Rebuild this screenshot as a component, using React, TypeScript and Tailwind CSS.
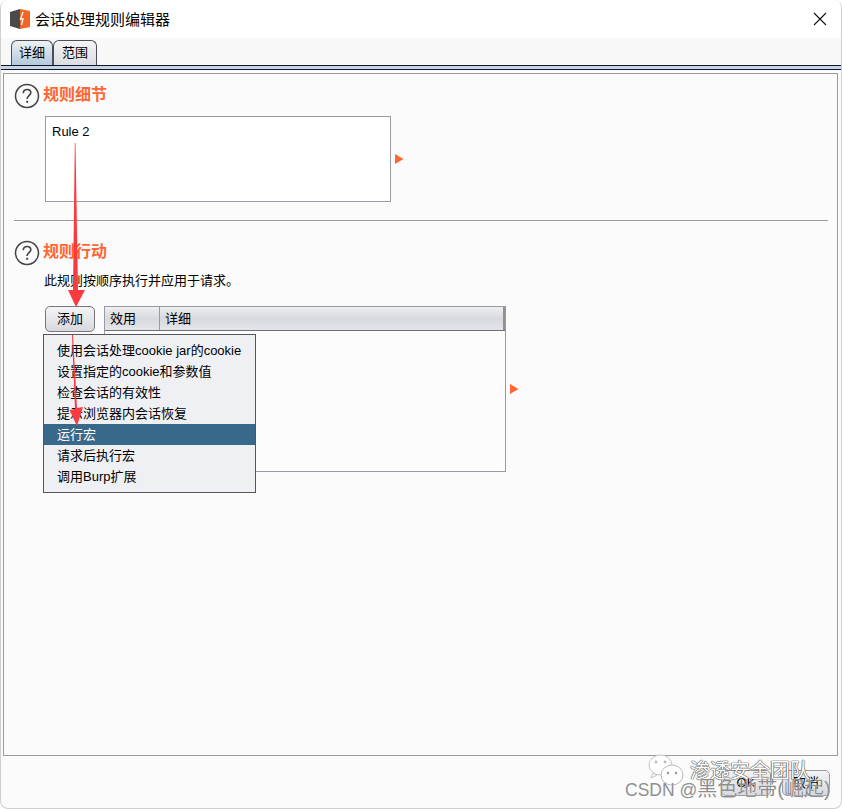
const FONT = { fontFamily: '"Liberation Sans","Noto Sans CJK SC",sans-serif' };

function Help() {
  return (
    <svg width="26" height="26" viewBox="0 0 26 26" className="shrink-0">
      <circle cx="13" cy="13" r="11.5" fill="#fbfbfb" stroke="#444" strokeWidth="1.5" />
      <path d="M9.3 10.2c0-2.3 1.6-3.7 3.8-3.7s3.7 1.3 3.7 3.3c0 2.9-3.7 3-3.7 6.2" fill="none" stroke="#444" strokeWidth="1.6" />
      <rect x="12.2" y="17.8" width="1.9" height="2" fill="#444" />
    </svg>
  );
}

function Tri() {
  return (
    <svg width="9" height="10" viewBox="0 0 9 10" className="shrink-0">
      <path d="M0 0L8.5 5L0 10Z" fill="#ff6633" />
    </svg>
  );
}

const items = [
  '使用会话处理cookie jar的cookie',
  '设置指定的cookie和参数值',
  '检查会话的有效性',
  '提示浏览器内会话恢复',
  '运行宏',
  '请求后执行宏',
  '调用Burp扩展',
];

export default function App() {
  return (
    <div className="relative w-[842px] h-[809px] bg-[#fbfbfb] overflow-hidden text-[13px] text-black flex flex-col rounded-[8px] border-l border-r border-b border-[#cfcfcf]" style={FONT}>
      <div className="h-[38px] bg-white flex items-center pl-[9px] shrink-0">
        <svg width="21" height="20" viewBox="0 0 21 20" className="shrink-0">
          <path d="M0 3L10 0V20L0 17Z" fill="#4a4a4a" />
          <path d="M10 0L20 2V18L10 20Z" fill="#f26522" />
          <path d="M13 3L10.5 10H13L11.5 16" fill="none" stroke="#fff" strokeWidth="1.3" />
        </svg>
        <span className="ml-[4px] text-[15px] leading-none">会话处理规则编辑器</span>
        <svg width="14" height="14" viewBox="0 0 14 14" className="ml-auto mr-[14px]">
          <path d="M1 1L13 13M13 1L1 13" stroke="#111" strokeWidth="1.1" />
        </svg>
      </div>

      <div className="h-[28px] bg-[#f8f8f8] flex items-end pl-[10px] shrink-0 border-b border-[#101828]">
        <div className="w-[42px] h-[25px] rounded-t-[6px] border border-b-0 border-[#4a4f58] bg-gradient-to-b from-[#eef1f4] to-[#b4c9dc] flex items-center justify-center text-[13px]">详细</div>
        <div className="w-[44px] h-[25px] rounded-t-[6px] border border-b-0 border-[#4a4f58] bg-gradient-to-b from-[#f4f4f6] to-[#dcdde2] flex items-center justify-center text-[13px]">范围</div>
      </div>
      <div className="h-[4px] bg-[#c6d6e8] border-b border-[#101828] shrink-0" />

      <div className="flex-1 flex flex-col pt-[3px] pl-[2px] pr-[3px]">
        <div className="h-[683px] border border-[#9a9aa5] shrink-0 bg-[#fbfbfb] pl-[10px] pr-[9px] pt-[9px]">
          <div className="flex items-center gap-[3px] h-[26px]">
            <Help />
            <span className="text-[16px] font-bold text-[#ff6633] leading-none mb-[3px]">规则细节</span>
          </div>
          <div className="flex items-center mt-[7px] ml-[31px] gap-[4px]">
            <div className="w-[346px] h-[86px] border border-[#9a9aa5] bg-white px-[6px] py-[7px] text-[13px] leading-[16px]">Rule 2</div>
            <Tri />
          </div>
          <div className="h-px bg-[#9a9aa5] mt-[18px]" />

          <div className="flex items-center gap-[3px] h-[26px] mt-[19px]">
            <Help />
            <span className="text-[16px] font-bold text-[#ff6633] leading-none mb-[3px]">规则行动</span>
          </div>
          <div className="ml-[30px] mt-[7px] text-[13px] leading-[16px]">此规则按顺序执行并应用于请求。</div>

          <div className="flex items-start ml-[31px] mt-[17px]">
            <div className="w-[50px] h-[26px] rounded-[5px] border border-[#77777f] bg-gradient-to-b from-[#f4f4f6] to-[#d8d9de] flex items-center justify-center">添加</div>
            <div className="flex items-center ml-[9px] gap-[4px]">
              <div className="w-[402px] h-[166px] border border-[#9a9aa5] bg-[#fcfcfc]">
                <div className="h-[24px] flex border-b border-[#6e7078] bg-gradient-to-b from-[#eeeff1] via-[#d8d9de] to-[#e4e5e9]">
                  <div className="w-[55px] border-r border-[#9a9aa5] pl-[5px] leading-[23px]">效用</div>
                  <div className="flex-1 pl-[5px] leading-[23px] border-r-2 border-[#8f9096]">详细</div>
                </div>
              </div>
              <Tri />
            </div>
          </div>
        </div>

        <div className="flex-1 flex justify-end items-start pt-[14px] pr-[8px] gap-[11px]">
          <div className="w-[50px] h-[26px] rounded-[5px] border border-[#9a9aa5] bg-gradient-to-b from-[#f4f4f6] to-[#d8d9de] flex items-center justify-center">OK</div>
          <div className="w-[48px] h-[26px] rounded-[5px] border border-[#9a9aa5] bg-gradient-to-b from-[#f4f4f6] to-[#d8d9de] flex items-center justify-center">取消</div>
        </div>
      </div>

      {/* popup menu */}
      <div className="absolute left-[42px] top-[334px] w-[213px] h-[159px] border border-[#55555c] bg-[#eef0f4] pt-[5px]">
        {items.map((t, i) => (
          <div key={t} className={`h-[21px] leading-[21px] pl-[13px] whitespace-nowrap text-[13px] ${i === 4 ? 'bg-[#38688a] text-white' : ''}`}>{t}</div>
        ))}
      </div>

      {/* annotation arrows */}
      <svg className="absolute left-[-1px] top-0 pointer-events-none" width="842" height="809">
        <path d="M74.8 143L75.5 143L78 290H85L76 307L68 290H73Z" fill="#fb3a40" />
        <path d="M72 335L73 335L77 408L83 407L77 426L69.5 410L75 409Z" fill="#fb3a40" />
      </svg>

      {/* watermark */}
      <svg className="absolute left-[646px] top-[754px]" width="38" height="33" viewBox="0 0 38 33">
        <ellipse cx="13.5" cy="11" rx="11.5" ry="10" fill="#fff" stroke="#c4c4c4" />
        <path d="M6 19L4 24L10 21Z" fill="#fff" stroke="#c4c4c4" />
        <ellipse cx="25" cy="21" rx="11" ry="10" fill="#fff" stroke="#bbb" />
        <circle cx="9" cy="8" r="1.4" fill="#bbb" />
        <circle cx="18" cy="8" r="1.4" fill="#bbb" />
        <circle cx="21" cy="19" r="1.2" fill="#999" />
        <circle cx="29" cy="19" r="1.2" fill="#999" />
      </svg>
      <div className="absolute left-[689px] top-[758px] text-[20px] leading-[26px] text-white whitespace-nowrap [text-shadow:0_0_1px_#444,0_0_1px_#444,0_0_1px_#444]">渗透安全团队</div>
      <div className="absolute left-[624px] top-[778px] text-[17.5px] leading-[22px] text-[#8f8f8f] whitespace-nowrap [text-shadow:0_0_1px_#fff]">CSDN @<span className="text-[20px]">黑色地带(崛起)</span></div>
    </div>
  );
}
